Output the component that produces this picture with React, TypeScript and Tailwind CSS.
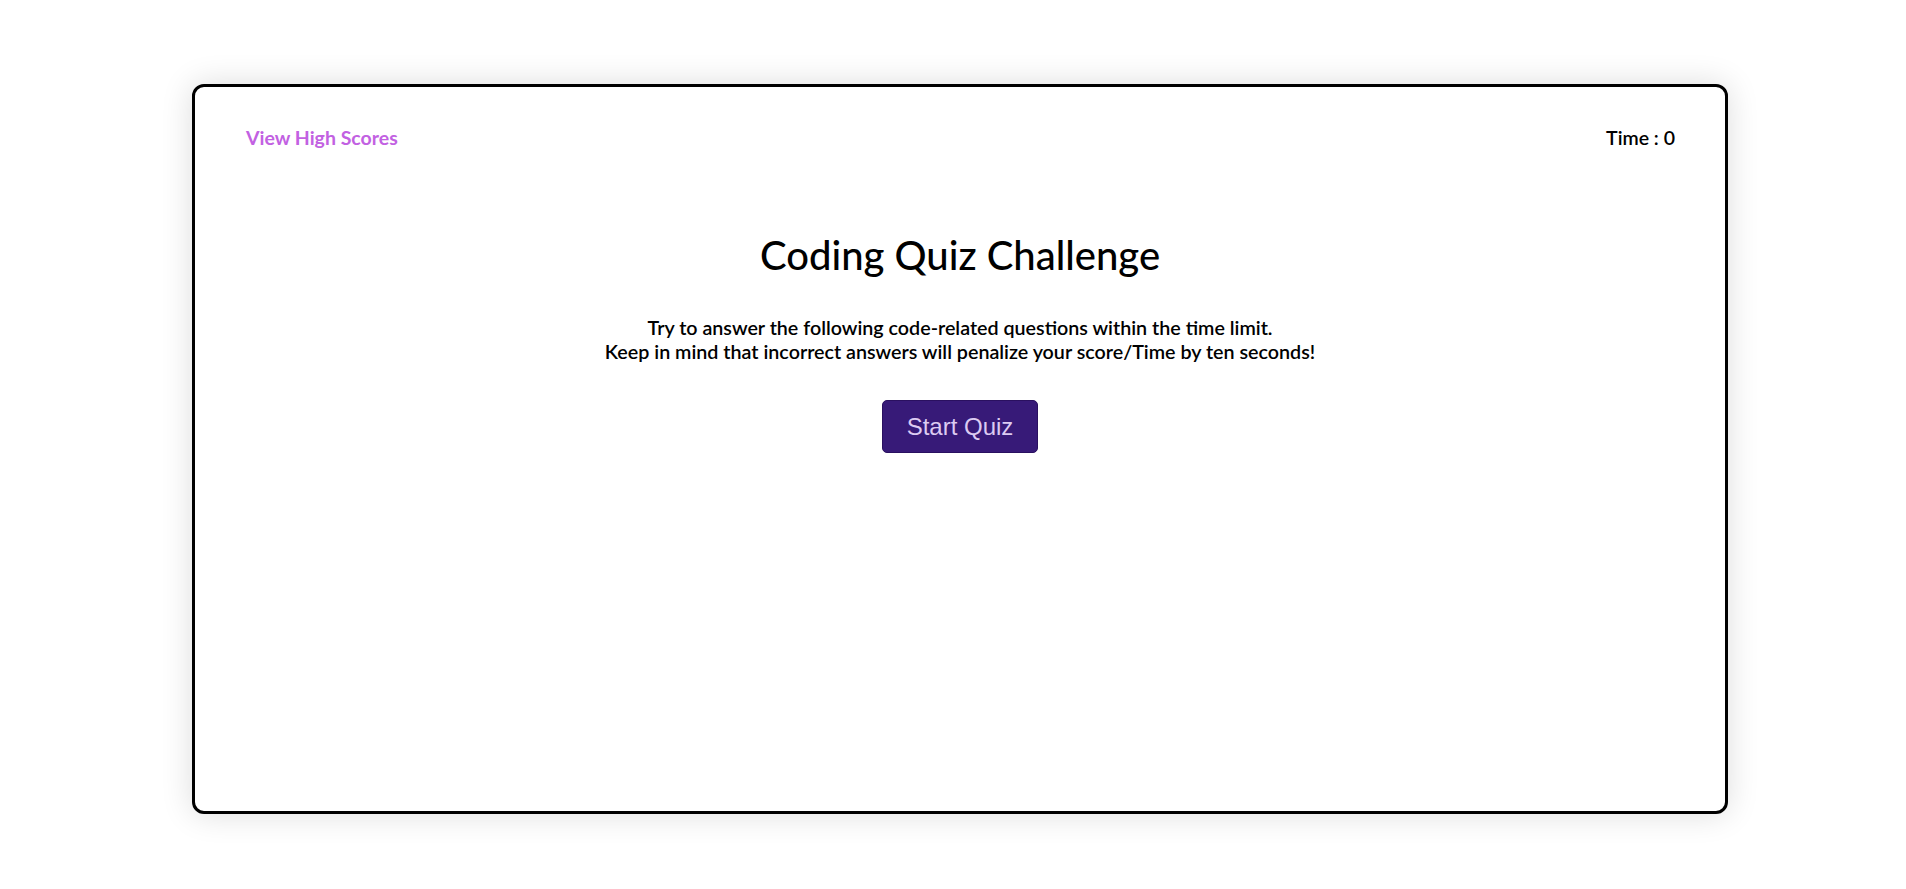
export default function App() {
  return (
    <div className="min-h-screen bg-white pt-[84px]" style={{ fontFamily: 'Lato, "Noto Sans", sans-serif' }}>
      <div className="ml-[192px] flex h-[730px] w-[1536px] flex-col rounded-[12px] border-[3px] border-black bg-white shadow-[0_0_32px_rgba(0,0,0,0.14)]">
        <div className="flex items-center justify-between pl-[51px] pr-[50px] pt-[36px]">
          <a className="text-[19.5px] font-bold leading-[30px] text-[#c261e2]">View High Scores</a>
          <span className="text-[19.5px] font-semibold leading-[30px] text-black">Time : 0</span>
        </div>
        <div className="flex flex-col items-center">
          <h1 className="mt-[78px] text-[40px] font-medium leading-[48px] text-black">Coding Quiz Challenge</h1>
          <p className="mt-[37px] text-center text-[19.7px] font-semibold leading-[24px] text-black">
            Try to answer the following code-related questions within the time limit.
            <br />
            Keep in mind that incorrect answers will penalize your score/Time by ten seconds!
          </p>
          <button className="mt-[36px] h-[53px] w-[156px] rounded-[5px] border border-[#2a1060] bg-[#371a78] text-[24px] text-[#dccbf2]" style={{ fontFamily: '"Liberation Sans", Arial, sans-serif' }}>
            Start Quiz
          </button>
        </div>
      </div>
    </div>
  );
}
